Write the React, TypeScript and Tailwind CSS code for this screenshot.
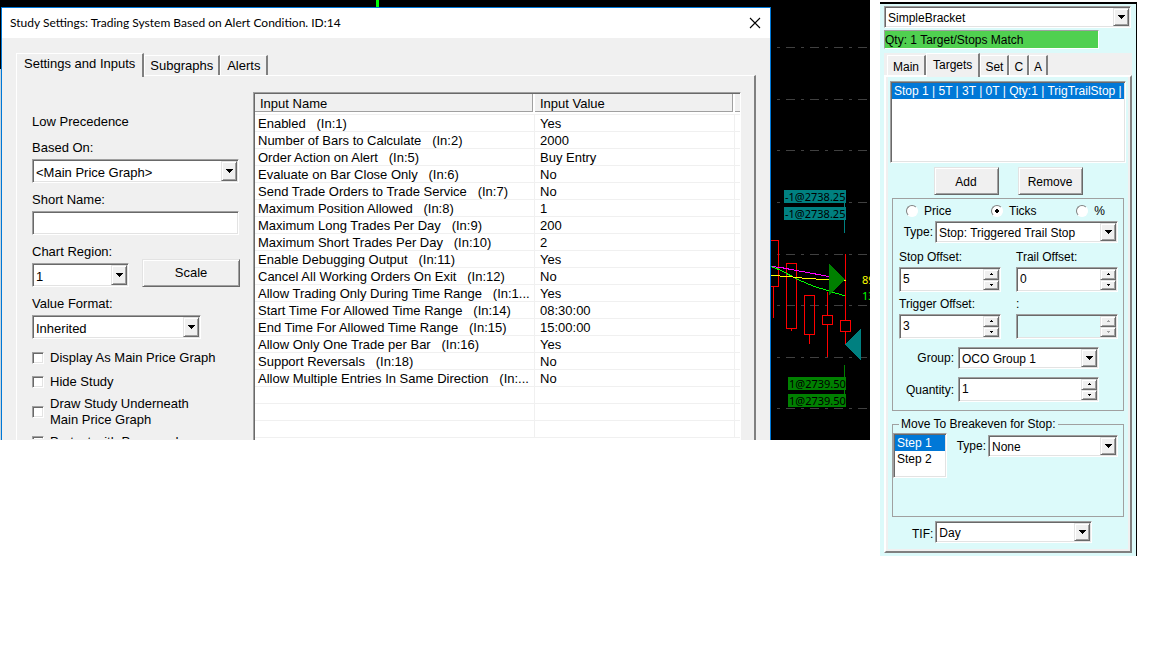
import { useState, type ReactNode } from "react";

const SUNKEN =
  "border border-t-[#a0a0a0] border-l-[#a0a0a0] border-r-white border-b-white shadow-[inset_1px_1px_0_#696969,inset_-1px_-1px_0_#e3e3e3]";
const RAISED =
  "border border-t-[#e3e3e3] border-l-[#e3e3e3] border-r-[#696969] border-b-[#696969] shadow-[inset_1px_1px_0_#fff,inset_-1px_-1px_0_#a0a0a0] bg-[#f0f0f0]";
const TAB = "border-t border-l border-r-2 border-t-white border-l-white border-r-[#808080] bg-[#f0f0f0] whitespace-nowrap";
const LABEL = "mb-0.5 block h-5 leading-[22px]";

const INPUTS: [string, string][] = [
  ["Enabled   (In:1)", "Yes"],
  ["Number of Bars to Calculate   (In:2)", "2000"],
  ["Order Action on Alert   (In:5)", "Buy Entry"],
  ["Evaluate on Bar Close Only   (In:6)", "No"],
  ["Send Trade Orders to Trade Service   (In:7)", "No"],
  ["Maximum Position Allowed   (In:8)", "1"],
  ["Maximum Long Trades Per Day   (In:9)", "200"],
  ["Maximum Short Trades Per Day   (In:10)", "2"],
  ["Enable Debugging Output   (In:11)", "Yes"],
  ["Cancel All Working Orders On Exit   (In:12)", "No"],
  ["Allow Trading Only During Time Range   (In:1...", "Yes"],
  ["Start Time For Allowed Time Range   (In:14)", "08:30:00"],
  ["End Time For Allowed Time Range   (In:15)", "15:00:00"],
  ["Allow Only One Trade per Bar   (In:16)", "Yes"],
  ["Support Reversals   (In:18)", "No"],
  ["Allow Multiple Entries In Same Direction   (In:...", "No"],
  ["", ""],
  ["", ""],
  ["", ""],
];

const GRID_LINES = [47, 99, 150, 202, 254, 305, 357, 408];

function Combo({ id, options, className }: { id: string; options: string[]; className: string }) {
  return (
    <div className={`flex bg-white p-px ${SUNKEN} ${className}`}>
      <select id={id} className="min-w-0 flex-1 appearance-none bg-transparent pt-0.5 pl-0.5 outline-none">
        {options.map((o) => <option key={o}>{o}</option>)}
      </select>
      <span aria-hidden="true" className={`flex w-4 shrink-0 items-center justify-center ${RAISED}`}>
        <svg width="7" height="4" viewBox="0 0 7 4" shapeRendering="crispEdges">
          <path d="M0 0h7v1H6v1H5v1H4v1H3V3H2V2H1V1H0z" />
        </svg>
      </span>
    </div>
  );
}

function Spinner({ id, initial, disabled, className }: { id: string; initial: string; disabled?: boolean; className: string }) {
  const [value, setValue] = useState(initial);
  const step = (by: number) => setValue(String(Number(value) + by));
  const color = disabled ? "#a0a0a0" : "#000";

  return (
    <div className={`flex p-px ${SUNKEN} ${disabled ? "" : "bg-white"} ${className}`}>
      <input
        id={id}
        value={value}
        disabled={disabled}
        onChange={(e) => setValue(e.target.value)}
        className="min-w-0 flex-1 bg-transparent pb-0.5 pl-0.5 outline-none"
      />
      <div className="flex w-4 shrink-0 flex-col">
        <button aria-label="Up" disabled={disabled} onClick={() => step(1)} className={`flex flex-1 items-center justify-center ${RAISED}`}>
          <svg width="3" height="2" viewBox="0 0 3 2" shapeRendering="crispEdges"><path d="M1 0h1v1h1v1H0V1h1z" fill={color} /></svg>
        </button>
        <button aria-label="Down" disabled={disabled} onClick={() => step(-1)} className={`flex flex-1 items-center justify-center ${RAISED}`}>
          <svg width="3" height="2" viewBox="0 0 3 2" shapeRendering="crispEdges"><path d="M0 0h3v1H2v1H1V1H0z" fill={color} /></svg>
        </button>
      </div>
    </div>
  );
}

function Check({ children, tall }: { children: ReactNode; tall?: boolean }) {
  return (
    <label className={`flex items-center gap-1.5 whitespace-nowrap ${tall ? "leading-4" : "h-5 leading-5"}`}>
      <input type="checkbox" className={`size-3 shrink-0 appearance-none bg-white checked:bg-black ${SUNKEN}`} />
      <span>{children}</span>
    </label>
  );
}

function Radio({ label, checked }: { label: string; checked?: boolean }) {
  return (
    <label className="flex items-center gap-1.5">
      <input
        type="radio"
        name="unit"
        defaultChecked={checked}
        className="size-3 appearance-none rounded-full border border-t-[#808080] border-l-[#808080] border-r-white border-b-white bg-white checked:bg-[radial-gradient(circle,#000_2px,#fff_2px)]"
      />
      {label}
    </label>
  );
}

function StudySettings() {
  return (
    <div className="flex flex-1 flex-col border-x border-t border-[#0078d7] bg-[#f0f0f0] font-['Liberation_Sans',Arial,sans-serif] text-[13px] text-black">
      <header className="flex h-[30px] items-center justify-between bg-white pr-[7px] pl-2">
        <h1 className="font-['Lato','Open_Sans',sans-serif] text-xs">
          Study Settings: Trading System Based on Alert Condition. ID:14
        </h1>
        <button aria-label="Close" className="p-0.5">
          <svg width="12" height="12" viewBox="0 0 12 12" fill="none" stroke="#000" strokeWidth="1.1">
            <path d="M1 1l10 10M11 1L1 11" />
          </svg>
        </button>
      </header>

      <div className="flex flex-1 flex-col px-3.5 pt-[15px]">
        <nav className="flex h-[22px] items-end">
          <button className={`relative z-10 -mb-0.5 h-6 px-[7px] pb-1 ${TAB}`}>Settings and Inputs</button>
          <button className={`h-5 w-[76px] ${TAB}`}>Subgraphs</button>
          <button className={`h-5 w-12 ${TAB}`}>Alerts</button>
        </nav>

        <div className="flex flex-1 border-t border-r-2 border-l border-t-white border-l-white border-r-[#808080] pr-[13px] pl-[15px]">
          <div className="w-[221px] shrink-0 pt-[35px]">
            <p className="mb-1.5 h-5 leading-[22px]">Low Precedence</p>

            <label htmlFor="based" className={LABEL}>Based On:</label>
            <Combo id="based" options={["<Main Price Graph>"]} className="mb-1.5 h-6 w-[207px]" />

            <label htmlFor="short" className={LABEL}>Short Name:</label>
            <input id="short" className={`mb-1.5 block h-6 w-[207px] bg-white px-1 outline-none ${SUNKEN}`} />

            <div className="mb-1.5 flex items-end gap-[13px]">
              <div>
                <label htmlFor="region" className={LABEL}>Chart Region:</label>
                <Combo id="region" options={["1"]} className="h-6 w-[97px]" />
              </div>
              <button className={`h-7 w-[98px] ${RAISED}`}>Scale</button>
            </div>

            <label htmlFor="format" className={LABEL}>Value Format:</label>
            <Combo id="format" options={["Inherited"]} className="mb-[9px] h-6 w-[169px]" />

            <div className="flex flex-col gap-1">
              <Check>Display As Main Price Graph</Check>
              <Check>Hide Study</Check>
              <Check tall>Draw Study Underneath<br />Main Price Graph</Check>
              <div className="h-[7px] overflow-hidden">
                <Check>Protect with Password</Check>
              </div>
            </div>
          </div>

          <div className="mt-4 min-w-0 flex-1 border-t border-r border-l border-t-[#a0a0a0] border-r-white border-l-[#a0a0a0] bg-white pt-px pl-px shadow-[inset_1px_1px_0_#696969]">
            <table className="w-full table-fixed border-separate border-spacing-0 text-left whitespace-pre">
              <colgroup>
                <col className="w-[280px]" />
                <col />
                <col className="w-[5px]" />
              </colgroup>
              <thead>
                <tr>
                  <th className="border-b border-[#f0f0f0] p-0 pr-0.5 pb-0.5 font-normal">
                    <div className="h-[18px] border-r border-b border-[#a0a0a0] bg-[#f0f0f0] pl-[5px] leading-5">Input Name</div>
                  </th>
                  <th className="border-b border-[#f0f0f0] p-0 pr-0.5 pb-0.5 font-normal">
                    <div className="h-[18px] border-r border-b border-[#a0a0a0] bg-[#f0f0f0] pl-[5px] leading-5">Input Value</div>
                  </th>
                  <th className="border-b border-[#f0f0f0] p-0 pb-0.5">
                    <div className="h-[18px] border-b border-[#a0a0a0] bg-[#f0f0f0]" />
                  </th>
                </tr>
              </thead>
              <tbody>
                {INPUTS.map(([name, value], i) => (
                  <tr key={i}>
                    <td className="border-r border-b border-[#f0f0f0] p-0 pl-[3px]">
                      <div className="h-4 leading-[18px]">{name}</div>
                    </td>
                    <td className="border-r border-b border-[#f0f0f0] p-0 pl-[5px]">
                      <div className="h-4 leading-[18px]">{value}</div>
                    </td>
                    <td className="border-b border-[#f0f0f0] p-0" />
                  </tr>
                ))}
              </tbody>
            </table>
          </div>
        </div>
      </div>
    </div>
  );
}

function Chart() {
  return (
    <svg width="99" height="440" viewBox="0 0 99 440" className="shrink-0 font-['Noto_Sans',sans-serif] text-[11px]" shapeRendering="crispEdges">
      {GRID_LINES.map((y) => (
        <path key={y} d={`M6 ${y}.5H96`} stroke="#404040" strokeDasharray="3 6 9 6" />
      ))}

      {/* candles */}
      <g fill="none" stroke="#f00">
        <path d="M-4 240.5H7.5V286.5H-4M2.5 286V318" />
        <path d="M15.5 263.5h10v65h-10zM20.5 329v2" />
        <path d="M33.5 295.5h10v39h-10zM38.5 335v9" />
        <path d="M51.5 315.5h10v9h-10zM56.5 292v23M56.5 325v32" />
        <path d="M69.5 320.5h10v11h-10zM74.5 254v66M74.5 332v13" />
      </g>

      {/* moving averages */}
      <g fill="none">
        <path d="M0 266.5L10 267.5L20 269.5L58 276.5" stroke="#f0f" />
        <path d="M0 266.5L9 270L28 280L42 286L74 296" stroke="#0f0" />
        <path d="M0 275.5L18 276.5L35 278.5L75 280.5" stroke="#ff0" />
      </g>
      <path d="M58 264L74 279.5L58 295z" fill="#008000" />
      <path d="M90 329L74 344.5L90 360z" fill="#008080" />

      <path d="M13 190h62v13H13zM13 207h62v13H13zM73 190h1v43h-1z" fill="#008080" />
      <text x="14" y="201">-1@2738.25</text>
      <text x="14" y="218">-1@2738.25</text>

      <path d="M17 377h58v13H17zM17 394h58v13H17zM73 365h1v42h-1z" fill="#008000" />
      <text x="18" y="388">1@2739.50</text>
      <text x="18" y="405">1@2739.50</text>

      <text x="91" y="284" fill="#ff0">89</text>
      <text x="91" y="300" fill="#0f0">13</text>
    </svg>
  );
}

function BracketPanel() {
  return (
    <aside className="mt-0.5 w-[257px] shrink-0 border-t-2 border-r border-black bg-[#dcfafa] px-1 pt-0.5 pb-[3px] font-['Liberation_Sans',Arial,sans-serif] text-xs text-black">
      <Combo id="bracket" options={["SimpleBracket"]} className="mb-0.5 h-[22px] w-[247px]" />
      <div className="mb-1 h-[19px] w-[215px] border border-t-[#a0a0a0] border-r-white border-b-white border-l-[#a0a0a0] bg-[#50d050] leading-[18px]">
        Qty: 1 Target/Stops Match
      </div>

      <nav className="flex h-[22px] items-end bg-[#f0f0f0] pl-[3px]">
        <button className={`h-5 px-[5px] pt-0.5 ${TAB}`}>Main</button>
        <button className={`relative z-10 -mb-0.5 h-6 px-1.5 pb-0.5 ${TAB}`}>Targets</button>
        <button className={`h-5 px-1 pt-0.5 ${TAB}`}>Set</button>
        <button className={`h-5 px-1 pt-0.5 ${TAB}`}>C</button>
        <button className={`h-5 px-1 pt-0.5 ${TAB}`}>A</button>
      </nav>

      <div className="border-2 border-t-white border-r-[#808080] border-b-[#808080] border-l-white bg-[#f0f0f0] px-0.5 pb-0.5">
        <div className="flex flex-col bg-[#dcfafa] px-0.5 pt-1 pb-1.5">
          <ul className={`mb-1 h-[82px] overflow-hidden bg-white p-px ${SUNKEN}`}>
            <li className="h-4 overflow-hidden bg-[#0078d7] pl-0.5 leading-[17px] whitespace-nowrap text-white">
              Stop 1 | 5T | 3T | 0T | Qty:1 | TrigTrailStop | I
            </li>
          </ul>

          <div className="mb-[3px] flex justify-center gap-[19px]">
            <button className={`h-7 w-[65px] pt-0.5 ${RAISED}`}>Add</button>
            <button className={`h-7 w-[65px] pt-0.5 ${RAISED}`}>Remove</button>
          </div>

          <fieldset className="mx-0.5 mb-[5px] border border-[#a0a0a0] pt-1 pr-[5px] pb-2 pl-1.5">
            <div className="mb-0.5 flex h-4 justify-between pr-[13px] pl-[7px]">
              <Radio label="Price" />
              <Radio label="Ticks" checked />
              <Radio label="%" />
            </div>
            <div className="mb-1.5 flex items-center justify-end gap-0.5">
              <label htmlFor="type">Type:</label>
              <Combo id="type" options={["Stop: Triggered Trail Stop"]} className="h-[22px] w-[183px]" />
            </div>
            <div className="mb-2 grid grid-cols-2 gap-x-[15px]">
              <div>
                <label htmlFor="stop" className="mb-0.5 block h-4 leading-4">Stop Offset:</label>
                <Spinner id="stop" initial="5" className="h-[25px]" />
              </div>
              <div>
                <label htmlFor="trail" className="mb-0.5 block h-4 leading-4">Trail Offset:</label>
                <Spinner id="trail" initial="0" className="h-[25px]" />
              </div>
              <div className="mt-1">
                <label htmlFor="trigger" className="mb-0.5 block h-4 leading-4">Trigger Offset:</label>
                <Spinner id="trigger" initial="3" className="h-[25px]" />
              </div>
              <div className="mt-1">
                <label htmlFor="extra" className="mb-0.5 block h-4 leading-4">:</label>
                <Spinner id="extra" initial="" disabled className="h-[25px]" />
              </div>
            </div>
            <div className="mb-2 flex items-center justify-end gap-1 pr-[19px]">
              <label htmlFor="group">Group:</label>
              <Combo id="group" options={["OCO Group 1"]} className="h-[22px] w-[141px]" />
            </div>
            <div className="flex items-center justify-end gap-1 pr-[19px]">
              <label htmlFor="quantity">Quantity:</label>
              <Spinner id="quantity" initial="1" className="h-[25px] w-[141px]" />
            </div>
          </fieldset>

          <fieldset className="mx-0.5 mb-1 border border-[#a0a0a0]">
            <legend className="ml-1.5 h-4 px-0.5 leading-4">Move To Breakeven for Stop:</legend>
            <div className="flex pb-[38px]">
              <ul className={`mt-px h-[45px] w-[54px] bg-white p-px ${SUNKEN}`}>
                <li className="h-4 bg-[#0078d7] pl-0.5 leading-4 text-white">Step 1</li>
                <li className="h-4 pl-0.5 leading-4">Step 2</li>
              </ul>
              <div className="mt-[3px] flex h-[22px] flex-1 items-center justify-end gap-0.5 pr-[5px]">
                <label htmlFor="step-type">Type:</label>
                <Combo id="step-type" options={["None"]} className="h-[22px] w-[130px]" />
              </div>
            </div>
          </fieldset>

          <div className="flex items-center gap-0.5 pl-[22px]">
            <label htmlFor="tif" className="pt-1">TIF:</label>
            <Combo id="tif" options={["Day"]} className="h-[22px] w-[157px]" />
          </div>
        </div>
      </div>
    </aside>
  );
}

export default function App() {
  return (
    <main className="flex min-h-screen items-start gap-2.5 bg-white pr-[15px]">
      <section className="flex min-w-0 flex-1 bg-black">
        <div className="mt-[69px] w-px bg-[#c8d4dc]" />
        <div className="flex min-w-0 flex-1 flex-col">
          <div className="h-[7px] pl-[375px]">
            <div className="h-full w-[3px] bg-[#00ff00]" />
          </div>
          <StudySettings />
        </div>
        <Chart />
      </section>
      <BracketPanel />
    </main>
  );
}
